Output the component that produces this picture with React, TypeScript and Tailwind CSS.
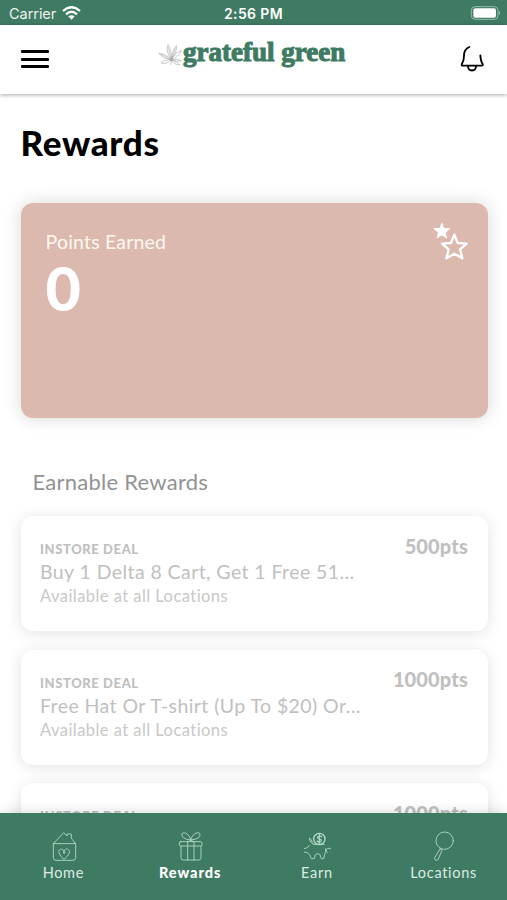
import type { ReactNode } from "react";

interface Reward {
  id: number;
  kind: string;
  title: string;
  where: string;
  points: string;
}

const rewards: Reward[] = [
  { id: 1, kind: "INSTORE DEAL", title: "Buy 1 Delta 8 Cart, Get 1 Free 51…", where: "Available at all Locations", points: "500pts" },
  { id: 2, kind: "INSTORE DEAL", title: "Free Hat Or T-shirt (Up To $20) Or…", where: "Available at all Locations", points: "1000pts" },
  { id: 3, kind: "INSTORE DEAL", title: "", where: "", points: "1000pts" },
];

function StatusBar() {
  return (
    <div className="grid h-[25px] shrink-0 grid-cols-3 items-center bg-[#3f7b63] pt-[3px] font-['Inter',sans-serif] text-white">
      <div className="flex items-center gap-[6px] pl-[9px]">
        <span className="text-[14.5px] leading-5 tracking-[-0.05px] text-white/90">Carrier</span>
        <svg className="-mt-[3px] h-[14px] w-[19px]" viewBox="0 0 57 42" fill="none" stroke="white" strokeWidth="7" aria-hidden="true">
          <path d="M3 15 Q28.500 -8 54 15" />
          <path d="M12 25 Q28.500 10 45 25" />
          <path d="M19 31 Q28.500 24 38 31 L28.500 41 Z" fill="white" stroke="none" />
        </svg>
      </div>
      <span className="text-center text-[14px] font-semibold leading-5 tracking-[0.4px]">2:56 PM</span>
      <div className="flex justify-end pr-[6px]">
        <svg className="-mt-[3px] h-[14px] w-[31px]" viewBox="0 0 93 42" aria-hidden="true">
          <rect x="4" y="2" width="80" height="38" rx="11" fill="none" stroke="#a9c6ba" strokeWidth="2.500" />
          <rect x="10" y="7" width="68" height="28" rx="6" fill="white" />
          <path d="M87 15 Q93 21 87 27 Z" fill="#a9c6ba" />
        </svg>
      </div>
    </div>
  );
}

function Leaf() {
  return (
    <svg className="mt-[8px] h-[22px] w-[24px]" viewBox="0 0 72 66" fill="none" stroke="#a0a0a0" strokeWidth="1.700" aria-hidden="true">
      <path d="M40 48 Q22 22 30 2 Q42 22 40 48 L31 10" />
      <path d="M40 48 Q42 20 55 5 Q58 24 40 48 L52 12" />
      <path d="M40 48 Q50 26 70 20 Q62 38 40 48" />
      <path d="M40 48 Q16 44 2 28 Q26 30 40 48 L9 31" />
      <path d="M40 48 Q24 62 9 57 Q20 46 40 48" />
      <path d="M40 48 Q58 42 70 50 Q56 55 40 48" />
      <path d="M40 48 Q58 50 65 63 Q48 62 40 48" />
      <path d="M40 48 L38 62" />
    </svg>
  );
}

function Header() {
  return (
    <header className="relative z-10 flex h-[69px] shrink-0 items-start justify-between bg-white pl-[21px] pr-[22px] shadow-[0_1px_4px_rgba(0,0,0,0.35)]">
      <button aria-label="Menu" className="mt-[25px] flex w-7 flex-col gap-[4.500px]">
        <span className="h-[3px] rounded-[1px] bg-black" />
        <span className="h-[3px] rounded-[1px] bg-black" />
        <span className="h-[3px] rounded-[1px] bg-black" />
      </button>
      <div className="mr-[3px] mt-[11px] flex items-start gap-px">
        <Leaf />
        <span className="mt-[7px] h-6 w-[164px] whitespace-nowrap font-['Liberation_Serif',serif] text-[27px] font-bold leading-[18px] text-[#3f7b63] [-webkit-text-stroke:1.1px_#3f7b63]">
          grateful green
        </span>
      </div>
      <button aria-label="Notifications" className="mt-[19px]">
        <svg className="h-[30px] w-[26px]" viewBox="0 0 78 90" fill="none" stroke="black" strokeWidth="5.500" strokeLinecap="round" aria-hidden="true">
          <path d="M31 9 C19 14 15 25 15 35 C15 50 13 52 8 61 Q7 65 12 65 H67 Q73 65 71 60 C66 53 65 50 64 34" />
          <path d="M27 66 C27 84 51 84 51 66" />
        </svg>
      </button>
    </header>
  );
}

function PointsCard() {
  return (
    <section className="mt-[39.500px] flex h-[215.500px] justify-between rounded-xl bg-[#dcb9af] pl-[25px] pr-[19px] shadow-[0_0_18px_rgba(0,0,0,0.16)]">
      <div>
        <p className="mt-[27.500px] text-[19.500px] leading-6 tracking-[0.2px] text-[#fff7ee]">Points Earned</p>
        <p className="text-[61px] font-black leading-[68px] text-white">0</p>
      </div>
      <svg className="mt-[18px] h-10 w-[37px]" viewBox="0 0 111 120" aria-hidden="true">
        <path d="M29.500 3 L36.500 21 L56 22 L41 35 L46 53 L29.500 43 L13 53 L18 35 L3 22 L22.500 21 Z" fill="white" />
        <path d="M67 41 L77 66 L104 68 L84 85 L91 112 L67 98 L43 112 L50 85 L30 68 L57 66 Z" fill="none" stroke="white" strokeWidth="7" strokeLinejoin="round" />
      </svg>
    </section>
  );
}

function RewardCard({ reward }: { reward: Reward }) {
  return (
    <li className="flex h-[115px] items-start justify-between rounded-xl bg-white px-[19.500px] shadow-[0_2px_15px_rgba(0,0,0,0.12)]">
      <div className="pt-[25px] text-[#c0c0c0]">
        <p className="text-[13px] font-black leading-4 tracking-[0.6px]">{reward.kind}</p>
        {reward.title && <p className="whitespace-nowrap text-[19.500px] leading-[30px] tracking-[0.42px]">{reward.title}</p>}
        {reward.where && <p className="text-[16.500px] leading-[18px] tracking-[0.45px] text-[#c8c8c8]">{reward.where}</p>}
      </div>
      <p className="mt-[17.500px] text-[20px] font-black leading-6 tracking-[0.15px] text-[#c0c0c0]">{reward.points}</p>
    </li>
  );
}

function HomeIcon() {
  return (
    <>
      <path d="M17 37 L47 5 L57 15 L57 9 H70 V22 L82 37 Z" />
      <path d="M16 37 V80 Q16 88 24 88 H75 Q83 88 83 80 V37" />
      <path d="M48 60 C42 48 29 56 33 66 Q37 76 48 85 Q60 76 64 66 C67 54 53 49 48 60 Q44 68 49 68 Q54 65 48 60" />
    </>
  );
}

function GiftIcon() {
  return (
    <>
      <rect x="13" y="32" width="68" height="13" rx="4" />
      <path d="M18 45 V80 Q18 87 25 87 H71 Q78 87 78 80 V45 M38 32 V87 M57 32 V87" />
      <path d="M47 27 Q18 24 21 9 C24 0 43 7 47 27 Q78 24 75 9 C71 0 52 7 47 27 L40 32 M47 27 L55 32" />
    </>
  );
}

function PiggyIcon() {
  return (
    <>
      <circle cx="52" cy="24" r="17" strokeWidth="4" />
      <path d="M59 17 Q50 11 47 18 Q46 23 53 24 Q60 26 57 31 Q52 36 45 30 M52 11 V37" strokeWidth="3.500" />
      <path d="M36 40 Q23 36 22 21 Q29 24 31 34 M34 40 H67 M22 43 Q18 53 7 53 M7 63 Q17 63 22 70 L28 83 H37 L40 71 Q46 65 54 71 L58 83 H65 L68 70 Q73 62 71 53 M76 65 Q69 56 76 53 Q81 50 86 53" />
    </>
  );
}

function SearchIcon() {
  return (
    <>
      <circle cx="47" cy="29" r="26" />
      <path d="M33 54 L17 80 Q15 86 21 88 Q26 89 28 84 L39 58 Q38 53 33 54 Z" />
    </>
  );
}

const tabs: { label: string; icon: ReactNode; active?: boolean }[] = [
  { label: "Home", icon: <HomeIcon /> },
  { label: "Rewards", icon: <GiftIcon />, active: true },
  { label: "Earn", icon: <PiggyIcon /> },
  { label: "Locations", icon: <SearchIcon /> },
];

function TabBar() {
  return (
    <nav className="relative z-10 grid h-[87px] shrink-0 grid-cols-4 bg-[#3f7b63] shadow-[0_-1px_12px_rgba(0,0,0,0.14)]">
      {tabs.map((tab) => (
        <button key={tab.label} className="flex flex-col items-center pt-[18px]">
          <svg className="h-[31px] w-[30px]" viewBox="0 0 90 93" fill="none" stroke="#b5dac9" strokeWidth="2.600" strokeLinejoin="round" strokeLinecap="round" aria-hidden="true">
            {tab.icon}
          </svg>
          <span className={`text-[14.5px] leading-[22px] ${tab.active ? "font-black tracking-[0.95px] text-white" : "tracking-[0.7px] text-[#dcece4]"}`}>
            {tab.label}
          </span>
        </button>
      ))}
    </nav>
  );
}

export default function App() {
  return (
    <div className="flex h-[900px] w-full flex-col overflow-hidden bg-white font-['Lato',sans-serif]">
      <StatusBar />
      <Header />
      <main className="min-h-0 flex-1 overflow-hidden pl-[20.500px] pr-[19.500px]">
        <h1 className="mt-[27px] text-[35px] font-black leading-[42px] tracking-[0.7px] text-black">Rewards</h1>
        <PointsCard />
        <h2 className="ml-[12px] mt-[50px] text-[22px] leading-7 tracking-[0.25px] text-[#929292]">Earnable Rewards</h2>
        <ul className="mt-[20px] flex flex-col gap-[18.500px]">
          {rewards.map((reward) => (
            <RewardCard key={reward.id} reward={reward} />
          ))}
        </ul>
      </main>
      <TabBar />
    </div>
  );
}
